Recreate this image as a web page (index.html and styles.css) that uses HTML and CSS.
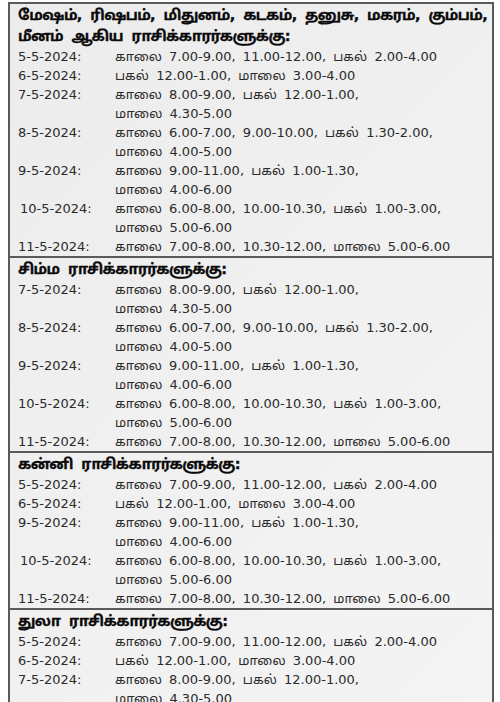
FILE: index.html
```html
<!DOCTYPE html>
<html lang="ta">
<head>
<meta charset="utf-8">
<title>ராசிக்காரர்களுக்கு</title>
<link rel="stylesheet" href="styles.css">
</head>
<body>
<div class="box">
  <section class="sec">
    <h2 class="head">மேஷம், ரிஷபம், மிதுனம், கடகம், தனுசு, மகரம், கும்பம், மீனம் ஆகிய ராசிக்காரர்களுக்கு:</h2>
    <div class="row"><span class="date">5-5-2024:</span><div class="times"><div>காலை 7.00-9.00, 11.00-12.00, பகல் 2.00-4.00</div></div></div>
    <div class="row"><span class="date">6-5-2024:</span><div class="times"><div>பகல் 12.00-1.00, மாலை 3.00-4.00</div></div></div>
    <div class="row"><span class="date">7-5-2024:</span><div class="times"><div>காலை 8.00-9.00, பகல் 12.00-1.00,</div><div>மாலை 4.30-5.00</div></div></div>
    <div class="row"><span class="date">8-5-2024:</span><div class="times"><div>காலை 6.00-7.00, 9.00-10.00, பகல் 1.30-2.00,</div><div>மாலை 4.00-5.00</div></div></div>
    <div class="row"><span class="date">9-5-2024:</span><div class="times"><div>காலை 9.00-11.00, பகல் 1.00-1.30,</div><div>மாலை 4.00-6.00</div></div></div>
    <div class="row"><span class="date ind">10-5-2024:</span><div class="times"><div>காலை 6.00-8.00, 10.00-10.30, பகல் 1.00-3.00,</div><div>மாலை 5.00-6.00</div></div></div>
    <div class="row"><span class="date">11-5-2024:</span><div class="times"><div>காலை 7.00-8.00, 10.30-12.00, மாலை 5.00-6.00</div></div></div>
  </section>
  <section class="sec">
    <h2 class="head">சிம்ம ராசிக்காரர்களுக்கு:</h2>
    <div class="row"><span class="date">7-5-2024:</span><div class="times"><div>காலை 8.00-9.00, பகல் 12.00-1.00,</div><div>மாலை 4.30-5.00</div></div></div>
    <div class="row"><span class="date">8-5-2024:</span><div class="times"><div>காலை 6.00-7.00, 9.00-10.00, பகல் 1.30-2.00,</div><div>மாலை 4.00-5.00</div></div></div>
    <div class="row"><span class="date">9-5-2024:</span><div class="times"><div>காலை 9.00-11.00, பகல் 1.00-1.30,</div><div>மாலை 4.00-6.00</div></div></div>
    <div class="row"><span class="date">10-5-2024:</span><div class="times"><div>காலை 6.00-8.00, 10.00-10.30, பகல் 1.00-3.00,</div><div>மாலை 5.00-6.00</div></div></div>
    <div class="row"><span class="date">11-5-2024:</span><div class="times"><div>காலை 7.00-8.00, 10.30-12.00, மாலை 5.00-6.00</div></div></div>
  </section>
  <section class="sec">
    <h2 class="head">கன்னி ராசிக்காரர்களுக்கு:</h2>
    <div class="row"><span class="date">5-5-2024:</span><div class="times"><div>காலை 7.00-9.00, 11.00-12.00, பகல் 2.00-4.00</div></div></div>
    <div class="row"><span class="date">6-5-2024:</span><div class="times"><div>பகல் 12.00-1.00, மாலை 3.00-4.00</div></div></div>
    <div class="row"><span class="date">9-5-2024:</span><div class="times"><div>காலை 9.00-11.00, பகல் 1.00-1.30,</div><div>மாலை 4.00-6.00</div></div></div>
    <div class="row"><span class="date ind">10-5-2024:</span><div class="times"><div>காலை 6.00-8.00, 10.00-10.30, பகல் 1.00-3.00,</div><div>மாலை 5.00-6.00</div></div></div>
    <div class="row"><span class="date">11-5-2024:</span><div class="times"><div>காலை 7.00-8.00, 10.30-12.00, மாலை 5.00-6.00</div></div></div>
  </section>
  <section class="sec">
    <h2 class="head">துலா ராசிக்காரர்களுக்கு:</h2>
    <div class="row"><span class="date">5-5-2024:</span><div class="times"><div>காலை 7.00-9.00, 11.00-12.00, பகல் 2.00-4.00</div></div></div>
    <div class="row"><span class="date">6-5-2024:</span><div class="times"><div>பகல் 12.00-1.00, மாலை 3.00-4.00</div></div></div>
    <div class="row"><span class="date">7-5-2024:</span><div class="times"><div>காலை 8.00-9.00, பகல் 12.00-1.00,</div><div>மாலை 4.30-5.00</div></div></div>
  </section>
</div>
</body>
</html>
```

FILE: styles.css
```css
html, body {
  margin: 0;
  padding: 0;
  background: #ffffff;
}
body {
  padding: 2px 0 0 8px;
  width: 486px;
  height: 700px;
  overflow: hidden;
  font-family: "DejaVu Sans", "Noto Sans Tamil", "Lohit Tamil", sans-serif;
}
.box {
  border: 2px solid #5a5a5a;
  background: linear-gradient(135deg, #ececec 0%, #f1f1f1 60%, #f4f4f4 100%);
}
.sec {
  padding: 1px 0 0 8px;
}
.sec + .sec {
  border-top: 2px solid #5a5a5a;
}
.head {
  margin: 0;
  font-size: 14.5px;
  font-weight: bold;
  line-height: 21px;
  letter-spacing: -0.6px;
  word-spacing: 4px;
  color: #0a0a0a;
  -webkit-text-stroke: 0.3px #0a0a0a;
}
.row {
  display: grid;
  grid-template-columns: 97px 1fr;
  font-size: 13px;
  line-height: 19px;
  color: #2b2b2b;
}
.date.ind {
  padding-left: 2px;
}
.times {
  word-spacing: 3px;
}
```
